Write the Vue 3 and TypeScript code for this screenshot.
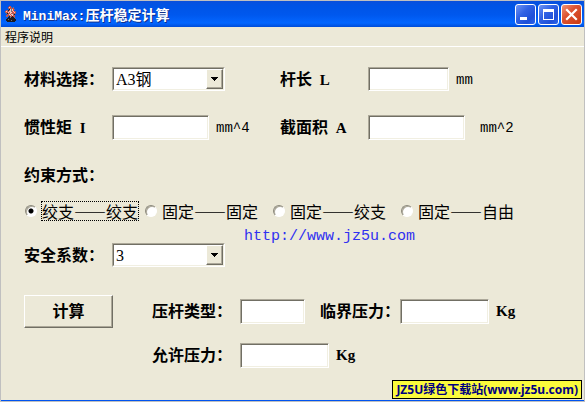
<script setup lang="ts">
import { ref } from 'vue'

const material = ref('A3钢')
const safety = ref('3')
const inertia = ref('')
const rodLength = ref('')
const area = ref('')
const rodType = ref('')
const critical = ref('')
const allowable = ref('')
const constraint = ref(0)
const constraints: string[] = ['绞支——绞支', '固定——固定', '固定——绞支', '固定——自由']

// Small title bar emblem, one character per pixel.
const emblem: string[] = [
  '....rr......',
  '...rwrg.g...',
  '...grrgrr...',
  '....kwgwrg..',
  '.rgkrwgwr...',
  'rwrgwwgrwrg.',
  'grrwrwwrrwr.',
  '.gkrgwrgrrg.',
  '..grwrwwgk..',
  '.rrgrwrwrg..',
  '.gr.kgrkrr..',
  '...kkgkkkg..',
  '..kkkkkkkk..',
  '.kkgkkkkkkk.',
  '.kkkkkgkkkk.',
  '..kkkkkkkk..',
]
const tints: Record<string, string> = { r: '#d8483e', w: '#eec8c0', g: '#77747c', k: '#1d1b20' }
const pixels = emblem.flatMap((line, y) =>
  [...line].map((c, x) => ({ x, y, fill: tints[c] })).filter((p) => p.fill),
)
</script>

<template>
  <div class="window" lang="zh-CN">
    <header class="titlebar">
      <svg class="emblem" viewBox="0 0 12 16" width="12" height="16" shape-rendering="crispEdges" aria-hidden="true">
        <rect v-for="p in pixels" :key="`${p.x}-${p.y}`" :x="p.x" :y="p.y" width="1" height="1" :fill="p.fill" />
      </svg>
      <h1 class="title"><span class="title-latin">MiniMax:</span>压杆稳定计算</h1>
      <div class="controls">
        <button class="control" type="button" aria-label="最小化">
          <svg viewBox="0 0 19 19" width="19" height="19"><path d="M4 12h7v3h-7z" fill="#fff" /></svg>
        </button>
        <button class="control" type="button" aria-label="最大化">
          <svg viewBox="0 0 19 19" width="19" height="19"><path d="M4 4h11v11h-11zM5 7v7h9v-7z" fill="#fff" fill-rule="evenodd" /></svg>
        </button>
        <button class="control close" type="button" aria-label="关闭">
          <svg viewBox="0 0 19 19" width="19" height="19"><path d="M5 5l9 9M14 5l-9 9" stroke="#fff" stroke-width="2.2" stroke-linecap="square" /></svg>
        </button>
      </div>
    </header>
    <nav class="menubar"><button class="menu" type="button">程序说明</button></nav>

    <form class="form" @submit.prevent>
      <div class="row">
        <label class="label main" for="material">材料选择：</label>
        <span class="combo">
          <select id="material" v-model="material"><option>A3钢</option></select>
          <span class="drop" aria-hidden="true"><svg viewBox="0 0 7 4" width="7" height="4" shape-rendering="crispEdges"><path d="M0 0h7v1h-1v1h-1v1h-1v1h-1v-1h-1v-1h-1v-1h-1z" /></svg></span>
        </span>
        <label class="label second after-combo" for="length">杆长 <span class="latin">L</span></label>
        <input id="length" v-model="rodLength" class="box medium" type="text" />
        <span class="unit">mm</span>
      </div>

      <div class="row geometry">
        <label class="label main" for="inertia">惯性矩 <span class="latin">I</span></label>
        <input id="inertia" v-model="inertia" class="box wide" type="text" />
        <span class="unit inertia-unit">mm^4</span>
        <label class="label second" for="area">截面积 <span class="latin">A</span></label>
        <input id="area" v-model="area" class="box wide" type="text" />
        <span class="unit far">mm^2</span>
      </div>

      <div id="constraint-label" class="label heading">约束方式：</div>
      <div class="radios" role="radiogroup" aria-labelledby="constraint-label">
        <label v-for="(name, i) in constraints" :key="i" class="radio">
          <input v-model="constraint" type="radio" name="constraint" :value="i" />
          <span class="radio-text">{{ name }}</span>
        </label>
      </div>
      <a class="link" href="http://www.jz5u.com">http://www.jz5u.com</a>

      <div class="row">
        <label class="label main" for="safety">安全系数：</label>
        <span class="combo">
          <select id="safety" v-model="safety"><option>3</option></select>
          <span class="drop" aria-hidden="true"><svg viewBox="0 0 7 4" width="7" height="4" shape-rendering="crispEdges"><path d="M0 0h7v1h-1v1h-1v1h-1v1h-1v-1h-1v-1h-1v-1h-1z" /></svg></span>
        </span>
      </div>

      <div class="results">
        <button class="calculate" type="submit">计算</button>
        <div class="row">
          <label class="label result" for="type">压杆类型：</label>
          <input id="type" v-model="rodType" class="box small" type="text" readonly />
          <label class="label critical" for="critical">临界压力：</label>
          <input id="critical" v-model="critical" class="box regular" type="text" readonly />
          <span class="unit strong">Kg</span>
        </div>
        <div class="row allowable">
          <label class="label result" for="allowable">允许压力：</label>
          <input id="allowable" v-model="allowable" class="box regular" type="text" readonly />
          <span class="unit strong">Kg</span>
        </div>
      </div>
    </form>
    <footer class="footer"><a class="badge" href="http://www.jz5u.com">JZ5U绿色下载站(www.jz5u.com)</a></footer>
  </div>
</template>

<style>
body {
  background: #ece9d8;
}
</style>

<style scoped>
* {
  box-sizing: border-box;
}
.window {
  display: flex;
  flex-direction: column;
  min-height: 100vh;
  border: 1px solid #c0c0c0;
  box-shadow: inset 0 -1px #0054f0;
  background: #ece9d8;
  color: #000;
  font-family: "Noto Sans CJK SC", sans-serif;
  font-size: 16px;
}
.titlebar {
  display: flex;
  align-items: center;
  height: 26px;
  padding: 0 2px 0 4px;
  background: linear-gradient(#0a50dc 0, #0054e6 5px, #0058ee 14px, #0366ff 22px, #004cd8 100%);
}
.title {
  flex: 1;
  margin: 0 0 0 6px;
  color: #fff;
  font-size: 14px;
  line-height: 20px;
  text-shadow: 1px 1px #10308c;
  white-space: nowrap;
}
.title-latin {
  font-family: "Liberation Mono", monospace;
  font-size: 13px;
  line-height: 1;
}
.controls {
  display: flex;
  gap: 2px;
}
.control {
  width: 21px;
  height: 21px;
  padding: 0;
  border: 1px solid #fff;
  border-radius: 3px;
  background: linear-gradient(135deg, #6f94f4 0, #3162e4 40%, #1e4fd8 75%, #2e66ec 100%);
}
.control svg {
  display: block;
}
.close {
  background: linear-gradient(135deg, #ef9478 0, #dd5332 40%, #c93a12 100%);
}
.menubar {
  height: 20px;
  border-bottom: 1px solid #fff;
}
.menu {
  display: block;
  padding: 0 4px;
  border: 0;
  background: none;
  color: #000;
  font-family: inherit;
  font-size: 12px;
  line-height: 19px;
}
.form {
  padding: 20px 23px 0;
}
.row {
  display: flex;
  align-items: center;
  height: 25px;
  white-space: nowrap;
}
.label {
  flex: none;
  padding-bottom: 3px;
  font-weight: 700;
  line-height: 22px;
}
.unit {
  font-family: "Liberation Mono", monospace;
  font-size: 14px;
}
.latin,
.strong {
  font-family: "Liberation Serif", serif;
  font-size: 15px;
  font-weight: 700;
  line-height: 1;
}
.latin {
  margin-left: 4px;
}
.main,
.second,
.result {
  width: 88px;
}
.after-combo {
  margin-left: 55px;
}
.unit {
  padding-left: 7px;
}
.inertia-unit {
  width: 71px;
}
.far {
  padding-left: 15px;
}
.box,
.combo {
  border: 1px solid;
  border-color: #aca899 #fff #fff #aca899;
}
.box {
  height: 25px;
  padding: 0 3px;
  border-radius: 0;
  outline: 0;
  background: #fff;
  box-shadow: inset 1px 1px #716f64, inset -1px -1px #f1efe2;
  font: 15px "Liberation Serif", "Noto Sans CJK SC", serif;
}
.small {
  width: 65px;
}
.medium {
  width: 81px;
  height: 24px;
  align-self: flex-start;
}
.regular {
  width: 89px;
}
.wide {
  width: 97px;
}
.combo {
  display: grid;
  align-self: flex-start;
  width: 113px;
  height: 24px;
}
.combo select,
.drop {
  grid-area: 1 / 1;
}
.combo select {
  width: 100%;
  height: 22px;
  padding: 0 20px 0 2px;
  border: 1px solid;
  border-color: #716f64 #f1efe2 #f1efe2 #716f64;
  border-radius: 0;
  outline: 0;
  appearance: none;
  background: #fff;
  color: #000;
  font: 16px "Liberation Serif", "Noto Sans CJK SC", serif;
}
.drop {
  z-index: 1;
  display: grid;
  place-items: center;
  justify-self: end;
  width: 17px;
  margin: 1px;
  border: 1px solid;
  border-color: #fff #716f64 #716f64 #fff;
  background: #ece9d8;
  box-shadow: inset -1px -1px #aca899;
  pointer-events: none;
}
.geometry {
  margin-top: 23px;
}
.heading {
  margin-top: 23px;
}
.radios {
  display: flex;
  gap: 8px;
  margin-top: 13px;
}
.radio {
  display: flex;
  align-items: center;
  width: 120px;
  white-space: nowrap;
}
.radio:first-child {
  width: 112px;
}
.radio input {
  flex: none;
  width: 12px;
  height: 12px;
  margin: 0 4px 0 1px;
  border: 1px solid;
  border-color: #8c897c #fff #fff #8c897c;
  border-radius: 50%;
  outline: 0;
  appearance: none;
  background: #fff;
  box-shadow: inset 1px 1px #aca899;
}
.radio input:checked {
  background: radial-gradient(circle, #000 2px, #fff 3px);
}
.radio-text {
  padding: 0 1px;
  font-kerning: none;
  font-variant-ligatures: none;
  line-height: 20px;
}
.radio input:checked + .radio-text {
  outline: 1px dotted #000;
  outline-offset: -1px;
}
.link {
  display: block;
  width: max-content;
  margin: 10px 0 0 220px;
  color: #3030f0;
  font-family: "Liberation Mono", monospace;
  font-size: 15px;
  line-height: 12px;
  text-decoration: none;
}
.results {
  display: grid;
  grid-template-columns: 89px 1fr;
  align-items: center;
  column-gap: 39px;
  row-gap: 15px;
  margin-top: 27px;
}
.calculate {
  height: 33px;
  padding: 0 0 3px;
  border: 1px solid;
  border-color: #fff #716f64 #716f64 #fff;
  background: #ece9d8;
  box-shadow: inset -1px -1px #aca899;
  color: #000;
  font-family: inherit;
  font-size: 16px;
  font-weight: 700;
}
.critical {
  width: 80px;
  margin: 0 0 0 15px;
}
.allowable {
  grid-column: 2;
}
.footer {
  display: flex;
  justify-content: flex-end;
  margin-top: auto;
  padding: 0 2px 2px;
}
.badge {
  padding: 0 3px;
  border: 1px solid #000;
  background: #fbfb3c;
  color: #000080;
  font-family: "Noto Sans", "Noto Sans CJK SC", sans-serif;
  font-size: 12px;
  font-weight: 700;
  line-height: 17px;
  text-decoration: none;
  white-space: nowrap;
}
</style>
